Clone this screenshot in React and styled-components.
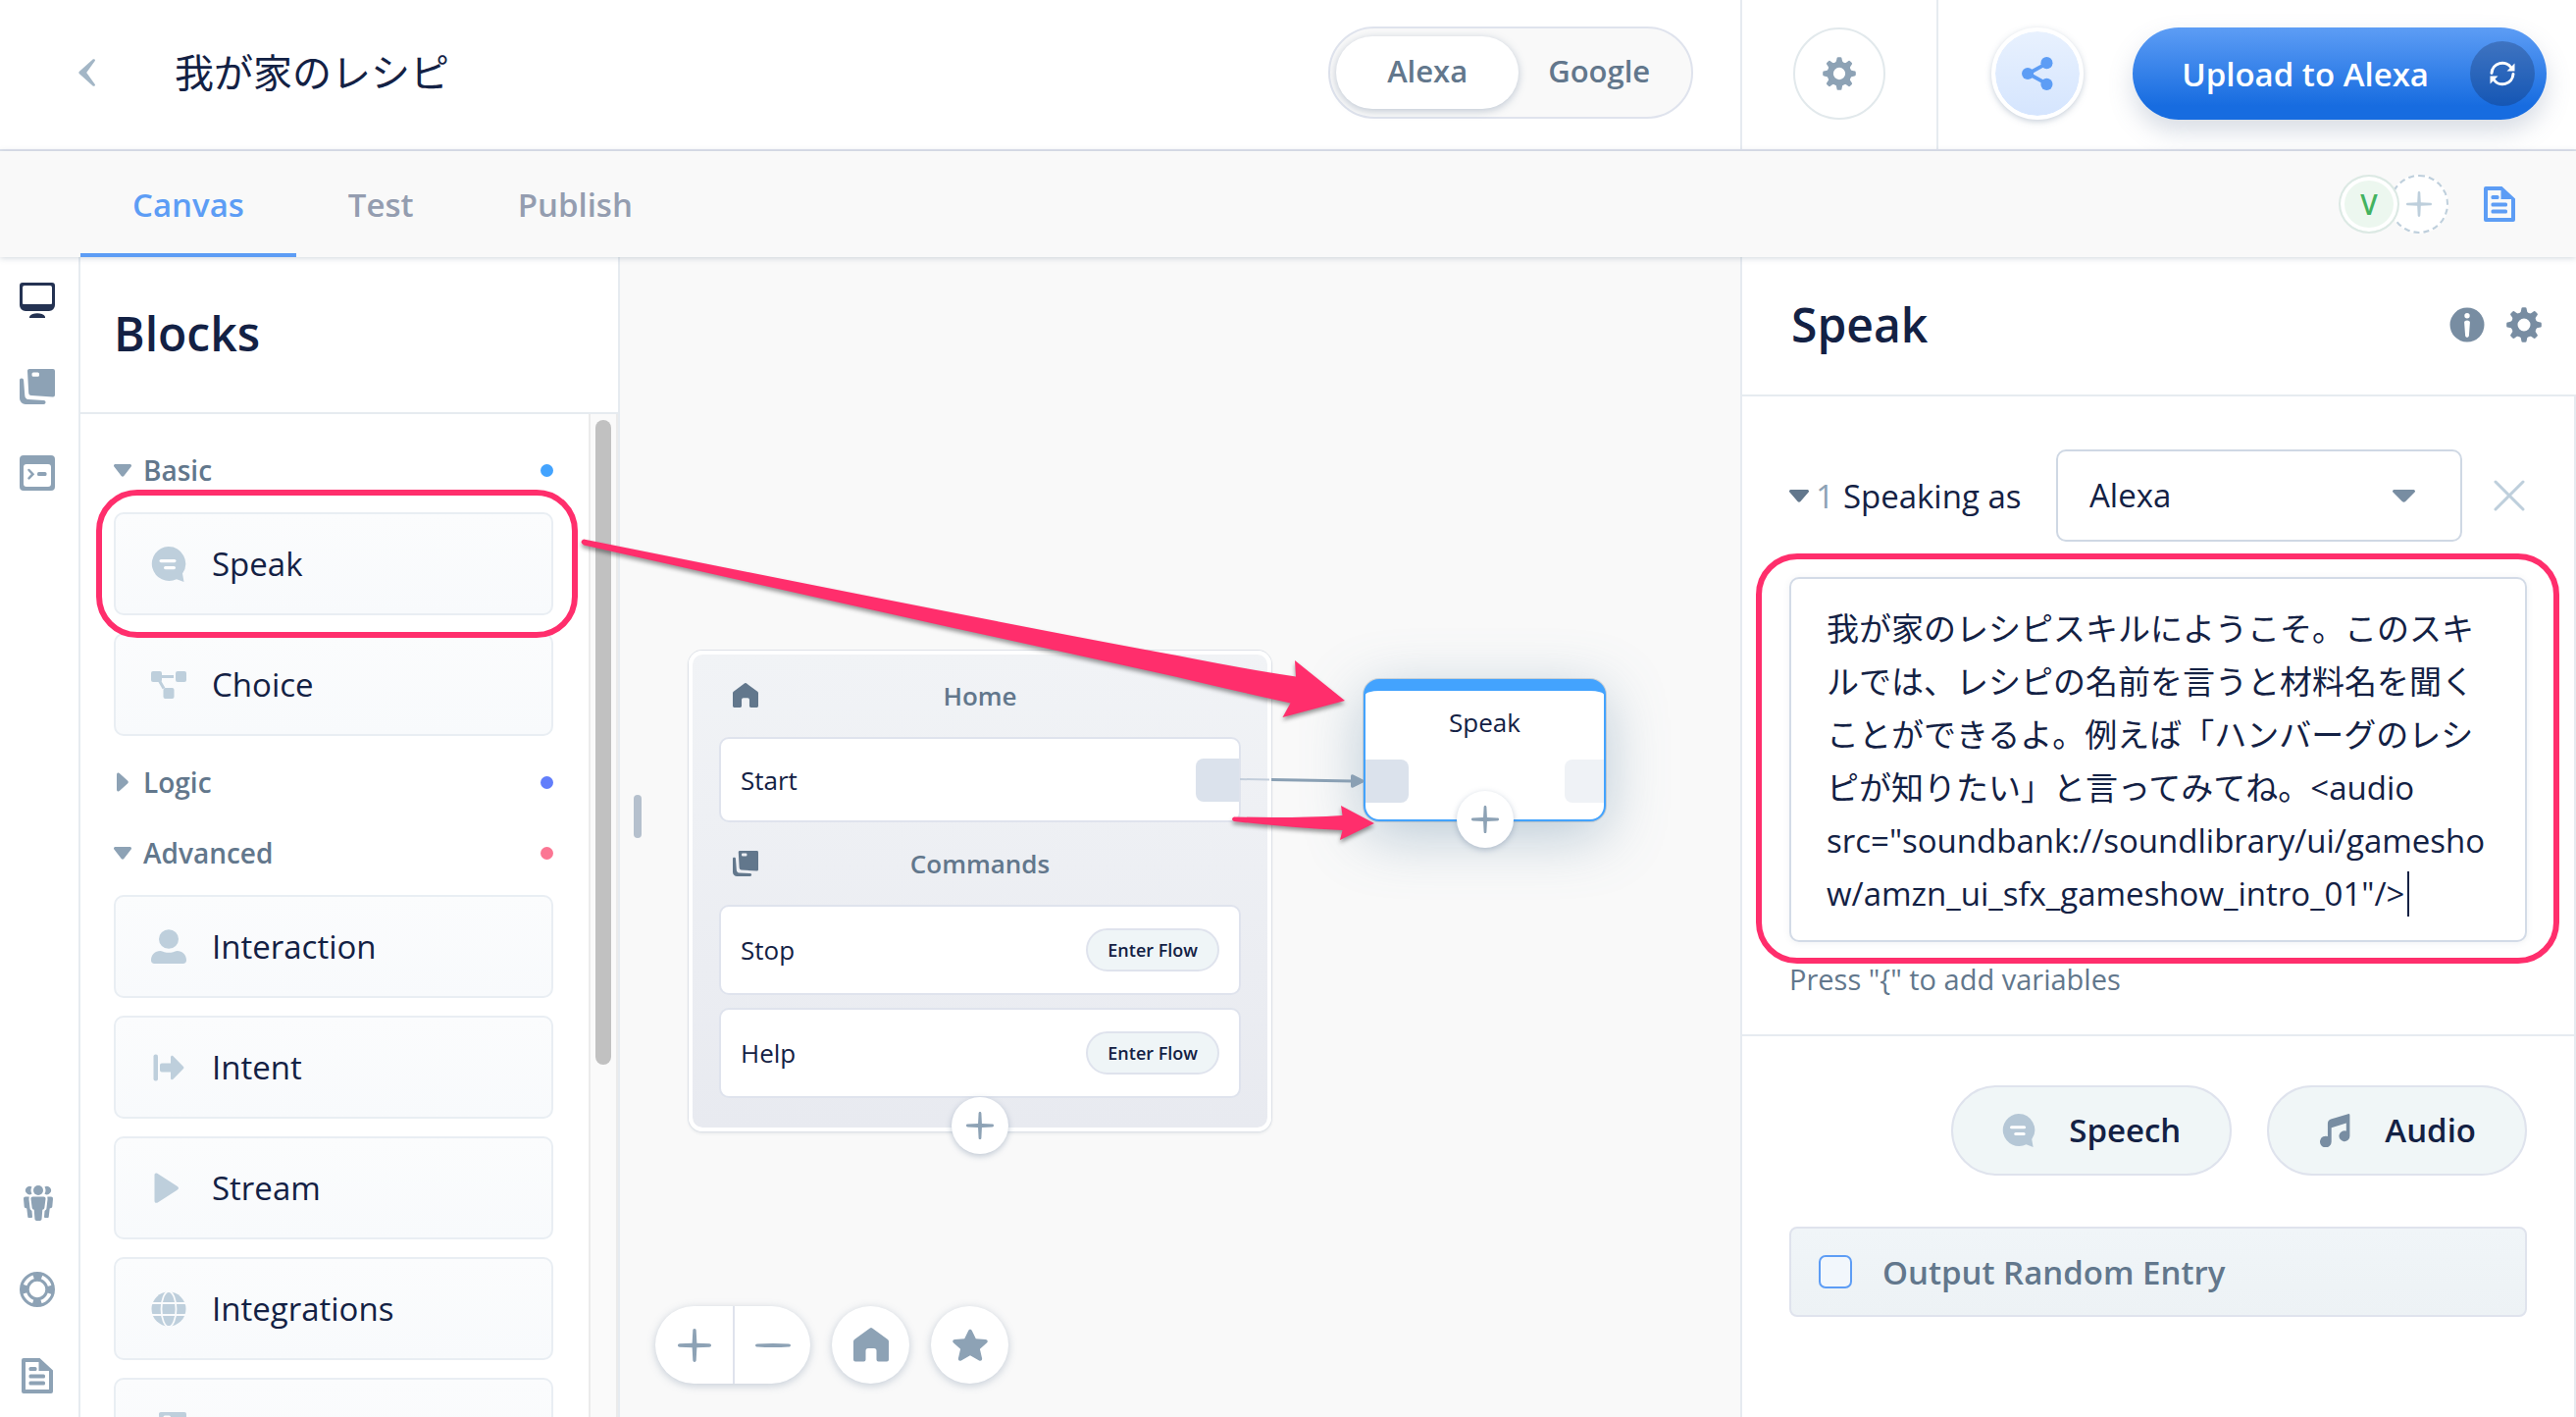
import React from "react";
import styled, { createGlobalStyle, css } from "styled-components";

const color = {
  ink: "#132144",
  slate: "#62778c",
  steel: "#8da2b5",
  mist: "#becfdc",
  blue: "#5d9df5",
  line: "#dfe3ed",
  soft: "#e6ebf0",
  pink: "#ff2e6c",
  canvas: "#f9f9f9",
};

const GlobalStyle = createGlobalStyle`
  *, *::before, *::after { box-sizing: border-box; }
  body {
    margin: 0;
    background: ${color.canvas};
    color: ${color.ink};
    font-family: "Open Sans", "Noto Sans CJK JP", sans-serif;
    font-size: 33px;
  }
  button, select, textarea, input { font: inherit; color: inherit; margin: 0; }
  button { border: 0; padding: 0; background: none; cursor: pointer; }
  h1, h2, h3 { margin: 0; font-weight: 600; }
  svg { display: block; flex: none; }
`;

/* ---------- icons ---------- */

const Svg = ({ size = 36, box = 36, children }) => (
  <svg width={size} height={size} viewBox={`0 0 ${box} ${box}`} fill="currentColor" aria-hidden="true">
    {children}
  </svg>
);

const BackIcon = () => (
  <svg width="18" height="28" viewBox="0 0 18 28" fill="currentColor" aria-hidden="true">
    <path d="M14.6.6c1-1 3 .1 2.200 1.500L8.200 14l8.600 11.900c.8 1.400-1.200 2.500-2.200 1.500L.7 15c-.5-.5-.5-1.500 0-2z" />
  </svg>
);

const GearIcon = ({ size }) => (
  <Svg size={size}>
    <circle cx="18" cy="18" r="9.800" fill="none" stroke="currentColor" strokeWidth="6.600" />
    {[0, 45, 90, 135, 180, 225, 270, 315].map((a) => (
      <path key={a} d="M13.600 6.500Q15 5 15.200 2.500 Q15.200.2 16.600.2 H19.400 Q20.800.2 20.800 2.500 Q21 5 22.400 6.500z" transform={`rotate(${a} 18 18)`} />
    ))}
  </Svg>
);

const ShareIcon = ({ size }) => (
  <Svg size={size}>
    <path d="M28 7 8 18l20 11" fill="none" stroke="currentColor" strokeWidth="4" />
    <circle cx="28" cy="6.500" r="6.400" />
    <circle cx="7.500" cy="18" r="6.400" />
    <circle cx="28" cy="29.500" r="6.400" />
  </Svg>
);

const SyncIcon = () => (
  <Svg size={28} box={28}>
    <g fill="none" stroke="currentColor" strokeWidth="3" strokeLinecap="round" strokeLinejoin="round">
      <path d="M3 13.500A11 11 0 0 1 23 8" />
      <path d="M25 14.500A11 11 0 0 1 5 20" />
    </g>
    <path d="M26.500 3.500v8h-8z" />
    <path d="M1.500 24.500v-8h8z" />
  </Svg>
);

const PlusIcon = ({ size }) => (
  <Svg size={size}>
    <path d="M18 0c1.300 0 1.700.8 1.800 2l.7 13.500 13.500.700c1.200.1 2 .5 2 1.800s-.8 1.700-2 1.800l-13.500.7L19.800 34c-.1 1.200-.5 2-1.800 2s-1.700-.8-1.800-2l-.7-13.500L2 19.800c-1.200-.1-2-.5-2-1.800s.8-1.700 2-1.800l13.500-.7L16.200 2c.1-1.200.5-2 1.800-2z" />
  </Svg>
);

const MinusIcon = ({ size }) => (
  <Svg size={size}>
    <path d="M2 16.400Q18 15.400 34 16.400c1.300.1 2 .7 2 1.600s-.7 1.500-2 1.600q-16 1-32 0C.7 19.500 0 18.900 0 18s.7-1.500 2-1.600z" />
  </Svg>
);

const DocIcon = ({ size }) => (
  <Svg size={size}>
    <path d="M4 0h16.500L34 12.500V34a2 2 0 0 1-2 2H4a2 2 0 0 1-2-2V2a2 2 0 0 1 2-2zm2 4v28h24V13H19.500V4z" fillRule="evenodd" />
    <rect x="9.500" y="9" width="8" height="4" rx="1.500" />
    <rect x="9.500" y="16.500" width="16.500" height="4" rx="1.500" />
    <rect x="9.500" y="23.500" width="16.500" height="4" rx="1.500" />
  </Svg>
);

const MonitorIcon = () => (
  <Svg>
    <path d="M3 0h30a3 3 0 0 1 3 3v20a6 6 0 0 1-6 6H6a6 6 0 0 1-6-6V3a3 3 0 0 1 3-3zm2 3a2 2 0 0 0-2 2v16a1 1 0 0 0 1 1h28a1 1 0 0 0 1-1V5a2 2 0 0 0-2-2z" fillRule="evenodd" />
    <path d="M10 36v-1.500c1.500-2.300 4.500-3.300 8-3.300s6.500 1 8 3.300V36z" />
  </Svg>
);

const StackIcon = ({ size }) => (
  <Svg size={size}>
    <path d="M10 0h24a2 2 0 0 1 2 2v24.500a2 2 0 0 1-2.100 2L12 27a3 3 0 0 1-2.800-3L8 2.200A2 2 0 0 1 10 0zm4 3.500a1.500 1.500 0 0 0-1.500 1.500v1.200a1.500 1.500 0 0 0 1.500 1.500h4.500A1.500 1.500 0 0 0 20 6.200V5a1.500 1.500 0 0 0-1.500-1.500z" fillRule="evenodd" />
    <path d="M2 9.500c1.300 0 2 .7 2.100 2L5.300 27c.2 2.500 1.400 3.800 3.700 4l15.500 1c1.300.1 2 .8 2 2s-.8 2-2 2H6a6 6 0 0 1-6-6V11.500c0-1.300.7-2 2-2z" />
  </Svg>
);

const TerminalIcon = () => (
  <Svg>
    <path d="M4 0h28a4 4 0 0 1 4 4v28a4 4 0 0 1-4 4H4a4 4 0 0 1-4-4V4a4 4 0 0 1 4-4zm3 9a3 3 0 0 0-3 3v17a3 3 0 0 0 3 3h22a3 3 0 0 0 3-3V12a3 3 0 0 0-3-3z" fillRule="evenodd" />
    <path d="m9.500 15 4 4.200-4 4.200" fill="none" stroke="currentColor" strokeWidth="2.500" strokeLinecap="round" />
    <rect x="18" y="17" width="9.500" height="4" rx="1.500" />
  </Svg>
);

const PeopleIcon = () => (
  <Svg>
    <circle cx="19" cy="5" r="5" />
    <path d="M12.500 1.600a7 7 0 0 0 0 7A4.200 4.200 0 1 1 12.500 1.600zM25.500 1.600a7 7 0 0 1 0 7A4.200 4.200 0 1 0 25.500 1.600z" />
    <path d="M13.500 11.500h11a2 2 0 0 1 2 2.200L25.300 23a2 2 0 0 1-2 1.700L22.500 34.500a1.800 1.800 0 0 1-1.800 1.500h-3.400a1.800 1.800 0 0 1-1.800-1.500l-.8-9.800a2 2 0 0 1-2-1.700l-1.200-9.300a2 2 0 0 1 2-2.200z" />
    <path d="M6 11.500h3.700l-.2 2.700 1.200 10 1.800 1.700.5 6.100a1 1 0 0 1-1 1H9.300a1 1 0 0 1-1-1L7.300 23.500l-2-.8a2 2 0 0 1-.6-1.200L4 13.700a2 2 0 0 1 2-2.200zM32 11.500h-3.700l.2 2.700-1.200 10-1.800 1.700-.5 6.100a1 1 0 0 0 1 1h2.700a1 1 0 0 0 1-1l1-8.500 2-.8a2 2 0 0 0 .6-1.200l.7-7.800a2 2 0 0 0-2-2.200z" />
  </Svg>
);

const RingIcon = () => (
  <Svg>
    <circle cx="18" cy="18" r="16.500" fill="none" stroke="currentColor" strokeWidth="3" />
    <circle cx="18" cy="18" r="9.800" fill="none" stroke="currentColor" strokeWidth="3" />
    <circle cx="18" cy="18" r="13" fill="none" stroke="currentColor" strokeWidth="8" strokeDasharray="8.400 12.020" strokeDashoffset="4.200" />
  </Svg>
);

const SpeechIcon = ({ size, lines }) => (
  <Svg size={size}>
    <path d="M17.500 0A17.500 17.500 0 0 1 32 27.500L33.500 36 26 33.200A17.500 17.500 0 1 1 17.500 0z" />
    <rect x="8.500" y="13" width="17" height="3.200" rx="1.600" fill={lines} />
    <rect x="13" y="20" width="12" height="3.200" rx="1.600" fill={lines} />
  </Svg>
);

const ChoiceIcon = () => (
  <Svg>
    <rect x="0" y="4" width="11" height="11" rx="2" />
    <rect x="25" y="4" width="11" height="11" rx="2" />
    <rect x="12.500" y="21" width="11" height="11" rx="2" />
    <path d="M10 9.500h13M8 13l5 8.500" stroke="currentColor" strokeWidth="3" fill="none" />
  </Svg>
);

const PersonIcon = () => (
  <Svg>
    <ellipse cx="18" cy="10" rx="10" ry="9.800" />
    <path d="M9.500 22q2 .2 4 1.200 4.500 1.300 9 0 2-1 4-1.200C32 22 36 26 36 31.500c0 2.300-1.200 3.500-3.500 3.500h-29C1.200 35 0 33.800 0 31.500 0 26 4 22 9.500 22z" />
  </Svg>
);

const IntentIcon = () => (
  <Svg>
    <rect x="2.500" y="4.500" width="4.500" height="27" rx="2" />
    <path d="M11 13.500h9V7.300c0-1.500 1.500-2 2.500-1.100L33 17q1 1 0 2L22.500 29.800c-1 .9-2.500.4-2.500-1.100v-6.200h-9a2 2 0 0 1-2-2v-5a2 2 0 0 1 2-2z" />
  </Svg>
);

const PlayIcon = () => (
  <Svg>
    <path d="M5 2.500c1 0 1.500.3 2.500 1L26.500 15.800c2 1.300 2 2.800 0 4L7.500 32c-2.500 1.600-4 .8-4-1.500V4.500c0-1.300.5-2 1.500-2z" />
  </Svg>
);

const GlobeIcon = () => (
  <Svg>
    <circle cx="18" cy="18" r="17.500" />
    <g fill="none" stroke="#fafbfc" strokeWidth="1.800">
      <ellipse cx="18" cy="18" rx="7.500" ry="18" />
      <path d="M0 12h36M0 24h36" />
    </g>
  </Svg>
);

const HomeIcon = ({ size }) => (
  <Svg size={size}>
    <path d="M16.800.5a2 2 0 0 1 2.400 0L35 12q1 .8 1 2v18.500a2 2 0 0 1-2 2h-8.500a2 2 0 0 1-2-2V23.500a2.500 2.500 0 0 0-2.500-2.500h-6a2.500 2.500 0 0 0-2.500 2.500v9a2 2 0 0 1-2 2H2a2 2 0 0 1-2-2V14q0-1.200 1-2z" />
  </Svg>
);

const StarIcon = ({ size }) => (
  <Svg size={size}>
    <path d="M16.200 3c.8-1.800 2.800-1.800 3.600 0l4 8.300 9.700.8c2.300.2 3 2 1.400 3.500l-7 6.200 2.200 9.400c.4 2-1.300 3.200-3 2.200L18 28.300l-9.100 5.100c-1.700 1-3.400-.2-3-2.200l2.200-9.400-7-6.200c-1.600-1.500-.9-3.300 1.400-3.500l9.700-.8z" />
  </Svg>
);

const InfoIcon = () => (
  <Svg>
    <path d="M18 .5a17.500 17.500 0 1 1 0 35 17.500 17.500 0 0 1 0-35zm0 5.500a2.700 2.700 0 1 0 0 5.400A2.700 2.700 0 0 0 18 6zm-2.900 9.500 1 13.500c.2 2.400 3.600 2.400 3.800 0l1-13.500c0-2.800-5.800-2.800-5.800 0z" fillRule="evenodd" />
  </Svg>
);

const MusicIcon = ({ size }) => (
  <Svg size={size}>
    <path d="M32.500.2q1.800-.4 1.800 1.400V24a5.800 5.800 0 1 1-3.800-5.400V10L14.500 15v15a6.200 6.200 0 1 1-4-5.600V10.500c0-2.500 1-4 3.300-4.800z" />
  </Svg>
);

const CrossIcon = ({ size }) => (
  <Svg size={size}>
    <path d="M4 4 32 32M32 4 4 32" stroke="currentColor" strokeWidth="3" strokeLinecap="round" fill="none" />
  </Svg>
);

const Caret = ({ side, width = 18 }) =>
  side ? (
    <svg width="18" height="20" viewBox="0 0 18 20" fill="currentColor" aria-hidden="true">
      <path d="M3 2.500C3 .3 5 0 6 1.200l8.300 7.500q1.200 1.300 0 2.600L6 18.800C5 20 3 19.700 3 17.500z" />
    </svg>
  ) : (
    <svg width={width} height="13" viewBox="0 0 18 13" preserveAspectRatio="none" fill="currentColor" aria-hidden="true">
      <path d="M1.800 0h14.400C18 0 18.500 1.600 17.500 2.800L10.300 12q-1.300 1.300-2.600 0L.5 2.800C-.5 1.600 0 0 1.800 0z" />
    </svg>
  );

/* ---------- page frame ---------- */

const Page = styled.div`
  position: relative;
  display: flex;
  flex-direction: column;
  height: 100vh;
  min-width: 1900px;
  overflow: hidden;
`;

const Header = styled.header`
  display: flex;
  align-items: stretch;
  height: 154px;
  flex: none;
  background: #fff;
  border-bottom: 2px solid ${color.line};
`;

const HeaderMain = styled.div`
  flex: 1;
  display: flex;
  align-items: center;
  padding: 0 48px 4px 80px;
`;

const BackButton = styled.button`
  color: #a3b6c6;
  margin-right: 80px;
`;

const ProjectTitle = styled.h1`
  flex: 1;
  font-size: 40px;
  line-height: 60px;
  font-weight: 400;
`;

const Toggle = styled.div`
  display: flex;
  align-items: center;
  height: 94px;
  padding: 6px;
  border: 2px solid ${color.line};
  border-radius: 47px;
  background: ${color.canvas};
`;

const ToggleOption = styled.button`
  height: 74px;
  padding: 0 ${(p) => (p.$on ? 52 : 36)}px 4px ${(p) => (p.$on ? 52 : 30)}px;
  border-radius: 37px;
  font-size: 31px;
  font-weight: 600;
  color: ${color.slate};
  ${(p) =>
    p.$on &&
    css`
      background: #fff;
      box-shadow: 0 2px 8px rgba(98, 119, 150, 0.4);
    `}
`;

const HeaderCell = styled.div`
  display: flex;
  align-items: center;
  gap: 50px;
  padding: 0 ${(p) => p.$right}px 2px ${(p) => p.$left}px;
  border-left: 2px solid ${color.soft};
`;

const RoundButton = styled.button`
  display: flex;
  align-items: center;
  justify-content: center;
  width: 94px;
  height: 94px;
  border-radius: 50%;
  border: 2px solid #e2e9ec;
  color: ${color.steel};
  background: #fff;
`;

const ShareButton = styled(RoundButton)`
  border: 4px solid #fff;
  color: ${color.blue};
  background: linear-gradient(#e8f1fe, #d5e5fe) padding-box, #fff;
  box-shadow: 0 2px 6px rgba(98, 119, 150, 0.35);
`;

const UploadButton = styled.button`
  display: flex;
  align-items: center;
  gap: 42px;
  height: 94px;
  padding: 0 12px 0 50px;
  border-radius: 47px;
  background: linear-gradient(#5d9df5, #176ce0 85%);
  box-shadow: 0 12px 24px rgba(98, 119, 150, 0.25);
  color: #fff;
  font-weight: 600;
`;

const UploadBadge = styled.span`
  display: flex;
  align-items: center;
  justify-content: center;
  width: 66px;
  height: 66px;
  border-radius: 50%;
  background: rgba(19, 33, 68, 0.28);
`;

const TabBar = styled.nav`
  position: relative;
  z-index: 2;
  display: flex;
  align-items: center;
  height: 108px;
  flex: none;
  padding: 0 60px 0 82px;
  background: ${color.canvas};
  box-shadow: 0 1px 6px rgba(98, 119, 140, 0.3);
`;

const Tab = styled.a`
  display: flex;
  align-items: center;
  height: 108px;
  padding: 4px 53px 0;
  border-bottom: 4px solid ${(p) => (p.$on ? color.blue : "transparent")};
  color: ${(p) => (p.$on ? color.blue : "#949db0")};
  font-weight: 600;
  text-decoration: none;
`;

const TabTools = styled.div`
  display: flex;
  align-items: center;
  margin-left: auto;
  color: ${color.blue};
`;

const Avatar = styled.span`
  position: relative;
  z-index: 1;
  display: flex;
  align-items: center;
  justify-content: center;
  width: 62px;
  height: 60px;
  border: 2px solid #dce9e4;
  border-radius: 50%;
  background: #ecf7ef;
  box-shadow: inset 0 0 0 4px #fff;
  color: #43b25f;
  font-size: 28px;
  font-weight: 600;
`;

const AddMember = styled.button`
  display: flex;
  align-items: center;
  justify-content: center;
  width: 60px;
  height: 60px;
  margin: 0 34px 0 -10px;
  border: 2px dashed ${color.mist};
  border-radius: 50%;
  background: #fff;
  color: ${color.mist};
`;

const Workspace = styled.div`
  display: flex;
  flex: 1;
  min-height: 0;
`;

/* ---------- left side ---------- */

const Rail = styled.nav`
  display: flex;
  flex-direction: column;
  align-items: center;
  gap: 52px;
  width: 82px;
  flex: none;
  padding: 26px 4px 24px 0;
  background: #fff;
  border-right: 2px solid ${color.soft};
`;

const RailButton = styled.button`
  color: ${(p) => (p.$on ? "#243252" : color.steel)};
  margin-top: ${(p) => (p.$push ? "auto" : 0)};
`;

const Blocks = styled.aside`
  display: flex;
  flex-direction: column;
  width: 550px;
  flex: none;
  background: #fff;
  border-right: 2px solid ${color.soft};
`;

const BlocksTitle = styled.h2`
  height: 160px;
  flex: none;
  padding: 0 34px;
  border-bottom: 2px solid ${color.soft};
  font-size: 48px;
  line-height: 156px;
`;

const BlocksBody = styled.div`
  display: flex;
  flex: 1;
  min-height: 0;
`;

const BlockList = styled.div`
  flex: 1;
  overflow: hidden;
  padding: 22px 36px 0 34px;
`;

const ScrollTrack = styled.div`
  width: 30px;
  flex: none;
  padding: 6px 5px;
  border: solid #ebebeb;
  border-width: 0 2px;
  background: #fafafa;
`;

const ScrollThumb = styled.div`
  width: 16px;
  height: 65%;
  border-radius: 8px;
  background: #c1c1c1;
`;

const GroupHead = styled.button`
  display: flex;
  align-items: center;
  gap: 12px;
  width: 100%;
  height: 72px;
  padding-bottom: 2px;
  color: ${color.steel};
`;

const GroupName = styled.span`
  flex: 1;
  text-align: left;
  color: ${color.slate};
  font-size: 28px;
  font-weight: 600;
`;

const Dot = styled.span`
  width: 13px;
  height: 13px;
  border-radius: 50%;
  background: ${(p) => p.$tone};
`;

const GroupItems = styled.div`
  display: flex;
  flex-direction: column;
  gap: 18px;
  padding: 6px 0 12px;
`;

const BlockCard = styled.div`
  position: relative;
  display: flex;
  align-items: center;
  gap: 26px;
  height: 105px;
  padding: 0 36px;
  border: 2px solid #e9eef3;
  border-radius: 10px;
  background: linear-gradient(#fbfcfd, #f8fafc);
  color: ${color.mist};
`;

const BlockName = styled.span`
  color: ${color.ink};
`;

const Highlight = styled.div`
  position: absolute;
  z-index: 3;
  inset: ${(p) => p.$inset};
  border: 6px solid ${color.pink};
  border-radius: 42px;
  pointer-events: none;
`;

/* ---------- canvas ---------- */

const Canvas = styled.main`
  position: relative;
  flex: 1;
  min-width: 0;
  background: ${color.canvas};
`;

const ResizeHandle = styled.div`
  position: absolute;
  left: 14px;
  top: 548px;
  width: 8px;
  height: 44px;
  border-radius: 4px;
  background: #b5c0cd;
`;

const HomeNode = styled.section`
  position: absolute;
  left: 70px;
  top: 401px;
  width: 594px;
  padding: 0 27px 30px;
  border: 4px solid #fff;
  border-radius: 14px;
  background: linear-gradient(#f1f3f6, #e8eaf0) padding-box;
  box-shadow: 0 0 0 1px #dde1e7, 0 2px 3px rgba(98, 119, 140, 0.15);
`;

const NodeHead = styled.div`
  display: grid;
  grid-template-columns: 26px 1fr 26px;
  align-items: center;
  height: 84px;
  padding: 0 14px;
  color: ${color.slate};
`;

const NodeTitle = styled.h3`
  text-align: center;
  font-size: 26px;
`;

const NodeRows = styled.div`
  display: flex;
  flex-direction: column;
  gap: 13px;
`;

const NodeRow = styled.div`
  display: flex;
  align-items: center;
  justify-content: space-between;
  height: ${(p) => p.$h}px;
  padding: 0 ${(p) => (p.$port ? 0 : 20)}px 0 20px;
  border: 2px solid ${color.line};
  border-radius: 10px;
  background: #fff;
  font-size: 26px;
`;

const Port = styled.span`
  width: ${(p) => (p.$pale ? 40 : 44)}px;
  height: 44px;
  background: ${(p) => (p.$pale ? "#eff2f6" : "#dbe2ec")};
  border-radius: ${(p) => (p.$side === "left" ? "0 8px 8px 0" : "8px 0 0 8px")};
`;

const FlowButton = styled.button`
  height: 44px;
  padding: 0 20px;
  border: 2px solid ${color.line};
  border-radius: 22px;
  background: #eff5f7;
  font-size: 18px;
  font-weight: 600;
`;

const NodePlus = styled.button`
  position: absolute;
  left: 50%;
  bottom: ${(p) => p.$drop}px;
  display: flex;
  align-items: center;
  justify-content: center;
  width: 58px;
  height: 58px;
  margin-left: -29px;
  border-radius: 50%;
  background: #fff;
  color: ${color.steel};
  box-shadow: 0 2px 6px rgba(98, 119, 150, 0.4);
`;

const SpeakNode = styled.section`
  position: absolute;
  left: 758px;
  top: 430px;
  width: 247px;
  height: 145px;
  padding-top: 21px;
  border: solid #43a3fe;
  border-width: 12px 2px 2px;
  border-radius: 16px;
  background: #fff;
  box-shadow: 0 0 0 1px rgba(98, 119, 140, 0.25), 0 14px 60px rgba(98, 135, 165, 0.42);
`;

const SpeakTitle = styled.h3`
  text-align: center;
  font-size: 26px;
  line-height: 22px;
  font-weight: 400;
`;

const PortRow = styled.div`
  display: flex;
  justify-content: space-between;
  margin-top: 27px;
`;

const Connector = styled.svg`
  position: absolute;
  left: 632px;
  top: 522px;
`;

const CanvasTools = styled.div`
  position: absolute;
  left: 36px;
  bottom: 34px;
  display: flex;
  gap: 22px;
  color: ${color.steel};
`;

const ToolPill = styled.div`
  display: flex;
  border-radius: 40px;
  background: #fff;
  box-shadow: 0 2px 8px rgba(98, 119, 150, 0.35);
`;

const ToolButton = styled.button`
  display: flex;
  align-items: center;
  justify-content: center;
  width: 79px;
  height: 79px;
  color: inherit;
  & + & { border-left: 2px solid ${color.line}; }
`;

/* ---------- inspector ---------- */

const Inspector = styled.aside`
  display: flex;
  flex-direction: column;
  width: 852px;
  flex: none;
  background: #fff;
  border-left: 2px solid ${color.soft};
`;

const InspectorHead = styled.div`
  display: flex;
  align-items: center;
  gap: 22px;
  height: 142px;
  flex: none;
  padding: 0 35px 2px 50px;
  border-bottom: 2px solid ${color.soft};
  color: #788da2;
`;

const InspectorTitle = styled.h2`
  flex: 1;
  color: ${color.ink};
  font-size: 48px;
  line-height: 60px;
`;

const InspectorBody = styled.div`
  flex: 1;
  border-right: 2px solid ${color.soft};
`;

const Section = styled.div`
  padding: ${(p) => p.$top}px 48px ${(p) => p.$bottom}px;
  border-bottom: ${(p) => (p.$line ? 2 : 0)}px solid ${color.soft};
`;

const SpeakerRow = styled.div`
  display: flex;
  align-items: center;
  color: ${color.slate};
`;

const SpeakerIndex = styled.span`
  margin: 0 9px 0 7px;
  color: ${color.steel};
`;

const SpeakerLabel = styled.label`
  flex: 1;
  color: ${color.ink};
`;

const SelectBox = styled.div`
  display: grid;
  align-items: center;
  width: 414px;
  & > * { grid-area: 1 / 1; }
  & > svg { justify-self: end; margin-right: 48px; color: #788da2; pointer-events: none; }
`;

const Select = styled.select`
  appearance: none;
  width: 100%;
  height: 94px;
  padding: 0 34px 2px 32px;
  border: 2px solid #cfd8e4;
  border-radius: 10px;
  background: #fff;
  color: ${color.ink};
`;

const RemoveButton = styled.button`
  margin-left: 30px;
  color: ${color.mist};
`;

const TextBox = styled.div`
  position: relative;
  margin-top: 36px;
`;

const TextArea = styled.textarea`
  display: block;
  width: 100%;
  height: 372px;
  padding: 24px 36px;
  border: 2px solid #d3dbe7;
  border-radius: 10px;
  outline: none;
  resize: none;
  overflow: hidden;
  line-height: 54px;
  overflow-wrap: anywhere;
  box-shadow: 0 1px 6px rgba(98, 119, 140, 0.1);
`;

const TextCursor = styled.span`
  position: absolute;
  left: 630px;
  bottom: 26px;
  width: 2px;
  height: 46px;
  background: ${color.ink};
`;

const Hint = styled.p`
  margin: 18px 0 0;
  color: ${color.slate};
  font-size: 29px;
  line-height: 40px;
`;

const AddRow = styled.div`
  display: flex;
  justify-content: flex-end;
  gap: 36px;
`;

const AddButton = styled.button`
  display: flex;
  align-items: center;
  gap: 34px;
  height: 92px;
  padding: 0 50px;
  border: 2px solid ${color.line};
  border-radius: 46px;
  background: #f0f6f7;
  color: ${(p) => p.$icon};
`;

const AddText = styled.span`
  padding-bottom: 2px;
  color: ${color.ink};
  font-weight: 600;
`;

const RandomOption = styled.label`
  display: flex;
  align-items: center;
  gap: 31px;
  height: 92px;
  margin-top: 52px;
  padding: 0 28px;
  border: 2px solid ${color.line};
  border-radius: 8px;
  background: linear-gradient(#f0f5f8, #edf2f5);
  color: ${color.slate};
  font-weight: 600;
`;

const Checkbox = styled.input`
  appearance: none;
  width: 34px;
  height: 34px;
  border: 2px solid ${color.blue};
  border-radius: 7px;
  background: #f2f7fc;
`;

const Arrows = styled.svg`
  position: absolute;
  z-index: 3;
  left: 0;
  top: 0;
  pointer-events: none;
  filter: drop-shadow(0 3px 2px rgba(0, 0, 0, 0.4));
`;

const groups = [
  {
    name: "Basic",
    tone: "#43a3fe",
    open: true,
    items: [
      { name: "Speak", icon: <SpeechIcon lines="#fff" />, marked: true },
      { name: "Choice", icon: <ChoiceIcon /> },
    ],
  },
  { name: "Logic", tone: "#627efb", items: [] },
  {
    name: "Advanced",
    tone: "#fb7693",
    open: true,
    items: [
      { name: "Interaction", icon: <PersonIcon /> },
      { name: "Intent", icon: <IntentIcon /> },
      { name: "Stream", icon: <PlayIcon /> },
      { name: "Integrations", icon: <GlobeIcon /> },
      { name: "Flow", icon: <StackIcon /> },
    ],
  },
];

const speech =
  '我が家のレシピスキルにようこそ。このスキルでは、レシピの名前を言うと材料名を聞くことができるよ。例えば「ハンバーグのレシピが知りたい」と言ってみてね。<audio src="soundbank://soundlibrary/ui/gameshow/amzn_ui_sfx_gameshow_intro_01"/>';

export default function App() {
  return (
    <Page lang="ja">
      <GlobalStyle />
      <Header>
        <HeaderMain>
          <BackButton aria-label="Back"><BackIcon /></BackButton>
          <ProjectTitle>我が家のレシピ</ProjectTitle>
          <Toggle>
            <ToggleOption $on>Alexa</ToggleOption>
            <ToggleOption>Google</ToggleOption>
          </Toggle>
        </HeaderMain>
        <HeaderCell $left={52} $right={52}>
          <RoundButton aria-label="Settings"><GearIcon size={34} /></RoundButton>
        </HeaderCell>
        <HeaderCell $left={54} $right={30}>
          <ShareButton aria-label="Share"><ShareIcon size={34} /></ShareButton>
          <UploadButton>
            Upload to Alexa
            <UploadBadge><SyncIcon /></UploadBadge>
          </UploadButton>
        </HeaderCell>
      </Header>

      <TabBar>
        <Tab href="#canvas" $on>Canvas</Tab>
        <Tab href="#test">Test</Tab>
        <Tab href="#publish">Publish</Tab>
        <TabTools>
          <Avatar>V</Avatar>
          <AddMember aria-label="Add member"><PlusIcon size={26} /></AddMember>
          <DocIcon size={36} />
        </TabTools>
      </TabBar>

      <Workspace>
        <Rail>
          <RailButton $on aria-label="Blocks"><MonitorIcon /></RailButton>
          <RailButton aria-label="Flows"><StackIcon /></RailButton>
          <RailButton aria-label="Variables"><TerminalIcon /></RailButton>
          <RailButton $push aria-label="Community"><PeopleIcon /></RailButton>
          <RailButton aria-label="Help"><RingIcon /></RailButton>
          <RailButton aria-label="Docs"><DocIcon /></RailButton>
        </Rail>

        <Blocks>
          <BlocksTitle>Blocks</BlocksTitle>
          <BlocksBody>
            <BlockList>
              {groups.map((g) => (
                <div key={g.name}>
                  <GroupHead aria-expanded={!!g.open}>
                    <Caret side={!g.open} />
                    <GroupName>{g.name}</GroupName>
                    <Dot $tone={g.tone} />
                  </GroupHead>
                  {g.open && (
                    <GroupItems>
                      {g.items.map((b) => (
                        <BlockCard key={b.name}>
                          {b.icon}
                          <BlockName>{b.name}</BlockName>
                          {b.marked && <Highlight $inset="-25px -27px -25px -20px" />}
                        </BlockCard>
                      ))}
                    </GroupItems>
                  )}
                </div>
              ))}
            </BlockList>
            <ScrollTrack><ScrollThumb /></ScrollTrack>
          </BlocksBody>
        </Blocks>

        <Canvas>
          <ResizeHandle />
          <HomeNode>
            <NodeHead>
              <HomeIcon size={26} />
              <NodeTitle>Home</NodeTitle>
            </NodeHead>
            <NodeRow $h={87} $port>
              Start
              <Port $side="right" />
            </NodeRow>
            <NodeHead>
              <StackIcon size={26} />
              <NodeTitle>Commands</NodeTitle>
            </NodeHead>
            <NodeRows>
              <NodeRow $h={92}>
                Stop
                <FlowButton>Enter Flow</FlowButton>
              </NodeRow>
              <NodeRow $h={92}>
                Help
                <FlowButton>Enter Flow</FlowButton>
              </NodeRow>
            </NodeRows>
            <NodePlus $drop={-27} aria-label="Add command"><PlusIcon size={28} /></NodePlus>
          </HomeNode>
          <SpeakNode>
            <SpeakTitle>Speak</SpeakTitle>
            <PortRow>
              <Port $side="left" />
              <Port $side="right" $pale />
            </PortRow>
            <NodePlus $drop={-29} aria-label="Add step"><PlusIcon size={28} /></NodePlus>
          </SpeakNode>
          <Connector width="128" height="24" viewBox="0 0 128 24" aria-hidden="true">
            <path d="M0 10 30 10.500" stroke="#c3cedb" strokeWidth="2" />
            <path d="M32 10.500 115 12" stroke="#8aa0b4" strokeWidth="3" />
            <path d="M113 7q0-2.500 2.500-1.500l10 5q2 1.500 0 3l-10 5q-2.500 1-2.500-1.500z" fill="#8aa0b4" />
          </Connector>
          <CanvasTools>
            <ToolPill>
              <ToolButton aria-label="Zoom in"><PlusIcon size={34} /></ToolButton>
              <ToolButton aria-label="Zoom out"><MinusIcon size={36} /></ToolButton>
            </ToolPill>
            <ToolPill><ToolButton aria-label="Home"><HomeIcon size={36} /></ToolButton></ToolPill>
            <ToolPill><ToolButton aria-label="Favourites"><StarIcon size={36} /></ToolButton></ToolPill>
          </CanvasTools>
        </Canvas>

        <Inspector>
          <InspectorHead>
            <InspectorTitle>Speak</InspectorTitle>
            <InfoIcon />
            <GearIcon size={36} />
          </InspectorHead>
          <InspectorBody>
            <Section $top={54} $bottom={36} $line>
              <SpeakerRow>
                <Caret width={20} />
                <SpeakerIndex>1</SpeakerIndex>
                <SpeakerLabel htmlFor="voice">Speaking as</SpeakerLabel>
                <SelectBox>
                  <Select id="voice" defaultValue="Alexa">
                    <option>Alexa</option>
                  </Select>
                  <Caret width={23} />
                </SelectBox>
                <RemoveButton aria-label="Remove"><CrossIcon size={36} /></RemoveButton>
              </SpeakerRow>
              <TextBox>
                <TextArea aria-label="Speech text" defaultValue={speech} spellCheck={false} />
                <TextCursor />
                <Highlight $inset="-24px -33px -22px -34px" />
              </TextBox>
              <Hint>Press "&#123;" to add variables</Hint>
            </Section>
            <Section $top={50} $bottom={50}>
              <AddRow>
                <AddButton $icon="#b5c7d6">
                  <SpeechIcon size={34} lines="#fff" />
                  <AddText>Speech</AddText>
                </AddButton>
                <AddButton $icon="#788da2">
                  <MusicIcon size={34} />
                  <AddText>Audio</AddText>
                </AddButton>
              </AddRow>
              <RandomOption>
                <Checkbox type="checkbox" />
                Output Random Entry
              </RandomOption>
            </Section>
          </InspectorBody>
        </Inspector>
      </Workspace>

      <Arrows width="1420" height="880" viewBox="0 0 1420 880" fill={color.pink} aria-hidden="true">
        <path d="M595 549.500 Q1040 639 1200 668 Q1270 682 1321 689.500 L1320 673 L1371 714 L1307.500 731 L1315.500 716.500 Q1250 702 1200 690 L972 640 Q780 597 595 555.500 Q590 552 595 549.500z" />
        <path d="M1258 832.500 Q1320 834 1368.500 831 L1367 821 L1401 839 L1366 856 L1368.500 846 Q1320 844 1258 837 Q1254 834.500 1258 832.500z" />
      </Arrows>
    </Page>
  );
}
